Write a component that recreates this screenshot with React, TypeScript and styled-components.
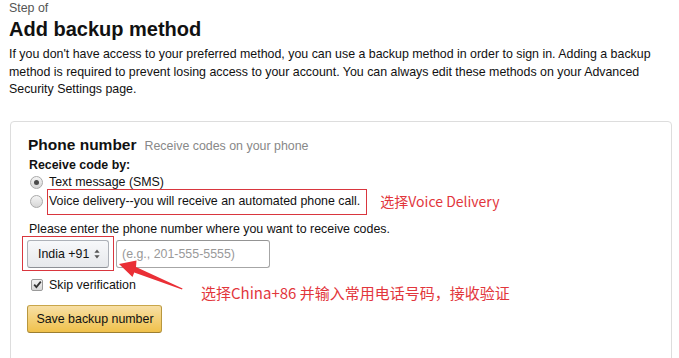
import React from 'react';
import styled, { createGlobalStyle } from 'styled-components';

const GlobalStyle = createGlobalStyle`
  html, body {
    margin: 0;
    padding: 0;
    background: #fff;
    height: 358px;
    overflow: hidden;
  }
  body {
    font-family: "Liberation Sans", Arial, sans-serif;
    font-size: 12.4px;
    color: #111;
  }
`;

const NOTE_RED = '#e2363c';

const Page = styled.div`
  padding: 1px 7px 0 9px;
`;

const StepLabel = styled.div`
  font-size: 12.4px;
  line-height: 15px;
  color: #555;
`;

const Title = styled.h1`
  margin: 2px 0 0;
  font-size: 20px;
  line-height: 23px;
  font-weight: 700;
`;

const Intro = styled.p`
  margin: 5px 0 0;
  line-height: 17.5px;
  white-space: nowrap;
`;

const Card = styled.div`
  position: relative;
  margin: 22px 0 0 1px;
  border: 1px solid #ddd;
  border-radius: 4px;
  padding: 13px 17px 60px;
`;

const CardHeading = styled.div`
  display: flex;
  align-items: baseline;
  gap: 8px;
  line-height: 19px;
`;

const CardTitle = styled.span`
  font-size: 15.5px;
  font-weight: 700;
`;

const CardHint = styled.span`
  color: #888;
`;

const FieldLabel = styled.div`
  margin-top: 2px;
  font-weight: 700;
  line-height: 15px;
  padding-left: 1px;
`;

const OptionRow = styled.label`
  display: flex;
  align-items: center;
  height: 19px;
  padding-left: 2px;
  white-space: nowrap;
`;

const Radio = styled.span<{ $checked?: boolean }>`
  position: relative;
  width: 11px;
  height: 11px;
  margin-right: 6px;
  border-radius: 50%;
  border: 1px solid #a9a9a9;
  background: linear-gradient(#f4f4f4, #d6d6d6);
  flex-shrink: 0;

  &::after {
    content: '';
    display: ${p => (p.$checked ? 'block' : 'none')};
    position: absolute;
    left: 3px;
    top: 3px;
    width: 5px;
    height: 5px;
    border-radius: 50%;
    background: #4a4a4a;
  }
`;

const Highlight = styled.span`
  position: relative;

  &::before {
    content: '';
    position: absolute;
    left: -2px;
    right: -7px;
    top: -5px;
    bottom: -7px;
    border: 1px solid #d9363e;
    pointer-events: none;
  }
`;

const Note = styled.span`
  position: absolute;
  white-space: nowrap;
  font-family: "Noto Sans CJK SC", "Noto Sans", sans-serif;
  font-size: 15px;
  line-height: 20px;
  color: ${NOTE_RED};
`;

const VoiceNote = styled(Note)`
  left: calc(100% + 20px);
  top: -3px;
  font-size: 14px;
`;

const Prompt = styled.div`
  margin-top: 10px;
  line-height: 16px;
  padding-left: 1px;
`;

const PhoneRow = styled.div`
  position: relative;
  display: flex;
  gap: 7px;
  margin: 3px 0 0 -1px;
`;

const SelectWrap = styled.div`
  position: relative;

  &::before {
    content: '';
    position: absolute;
    left: -5px;
    right: -5px;
    top: -4px;
    bottom: -3px;
    border: 1px solid #d9363e;
    pointer-events: none;
  }
`;

const CountrySelect = styled.button`
  display: flex;
  align-items: center;
  justify-content: space-between;
  box-sizing: border-box;
  width: 82px;
  height: 28px;
  padding: 0 8px 0 10px;
  border: 1px solid #adb1b8;
  border-bottom-color: #8d9096;
  border-radius: 3px;
  background: linear-gradient(#f7f8fa, #e7e9ec);
  font-family: inherit;
  font-size: 12.4px;
  color: #111;
  white-space: nowrap;
`;

const PhoneInput = styled.input`
  box-sizing: border-box;
  width: 154px;
  height: 28px;
  padding: 0 5px;
  border: 1px solid #a6a6a6;
  border-top-color: #949494;
  border-radius: 3px;
  font-family: inherit;
  font-size: 12.4px;
  color: #111;
  outline: none;

  &::placeholder {
    color: #999;
  }
`;

const Arrow = styled.svg`
  position: absolute;
  left: 88px;
  top: 18px;
  width: 100px;
  height: 36px;
  overflow: visible;
`;

const ChinaNote = styled(Note)`
  left: 174px;
  top: 43px;
`;

const CheckRow = styled.label`
  display: flex;
  align-items: center;
  height: 18px;
  margin-top: 8px;
  padding-left: 3px;
`;

const CheckBox = styled.span`
  display: flex;
  align-items: center;
  justify-content: center;
  width: 10px;
  height: 10px;
  margin-right: 6px;
  border: 1px solid #9a9a9a;
  border-radius: 2px;
  background: linear-gradient(#f2f2f2, #d8d8d8);
`;

const SaveButton = styled.button`
  display: block;
  box-sizing: border-box;
  width: 135px;
  height: 28px;
  margin: 11px 0 0 -1px;
  padding: 0 0 0 1px;
  border: 1px solid #a88734;
  border-color: #c9a64a #b8973e #9c7e31;
  border-radius: 3px;
  background: linear-gradient(#f7dfa5, #f0c14b);
  font-family: inherit;
  font-size: 12.4px;
  color: #111;
  white-space: nowrap;
`;

const SortIcon = () => (
  <svg width="6" height="10" viewBox="0 0 6 10">
    <path d="M3 0.5 L5.6 3.8 H0.4 Z" fill="#555" />
    <path d="M3 9.5 L5.6 6.2 H0.4 Z" fill="#555" />
  </svg>
);

const CheckMark = () => (
  <svg width="9" height="9" viewBox="0 0 9 9">
    <path d="M1.2 4.6 L3.4 7 L7.8 1.6" fill="none" stroke="#333" strokeWidth="1.8" />
  </svg>
);

export default function App() {
  return (
    <Page>
      <GlobalStyle />
      <StepLabel>Step of</StepLabel>
      <Title>Add backup method</Title>
      <Intro>
        If you don't have access to your preferred method, you can use a backup method in order to sign in. Adding a backup
        <br />
        method is required to prevent losing access to your account. You can always edit these methods on your Advanced
        <br />
        Security Settings page.
      </Intro>

      <Card>
        <CardHeading>
          <CardTitle>Phone number</CardTitle>
          <CardHint>Receive codes on your phone</CardHint>
        </CardHeading>
        <FieldLabel>Receive code by:</FieldLabel>
        <OptionRow>
          <Radio $checked />
          Text message (SMS)
        </OptionRow>
        <OptionRow>
          <Radio />
          <Highlight>
            Voice delivery--you will receive an automated phone call.
            <VoiceNote>选择Voice Delivery</VoiceNote>
          </Highlight>
        </OptionRow>

        <Prompt>Please enter the phone number where you want to receive codes.</Prompt>
        <PhoneRow>
          <SelectWrap>
            <CountrySelect type="button">
              India +91
              <SortIcon />
            </CountrySelect>
          </SelectWrap>
          <PhoneInput placeholder="(e.g., 201-555-5555)" />
          <Arrow viewBox="0 0 100 36">
            <polygon
              points="4,6 21.5,2.5 21,9 67.6,30.6 67,31.4 19.2,14.6 17.5,19"
              fill="#ea2f36"
            />
          </Arrow>
          <ChinaNote>选择China+86 并输入常用电话号码，接收验证</ChinaNote>
        </PhoneRow>

        <CheckRow>
          <CheckBox>
            <CheckMark />
          </CheckBox>
          Skip verification
        </CheckRow>

        <SaveButton type="button">Save backup number</SaveButton>
      </Card>
    </Page>
  );
}
